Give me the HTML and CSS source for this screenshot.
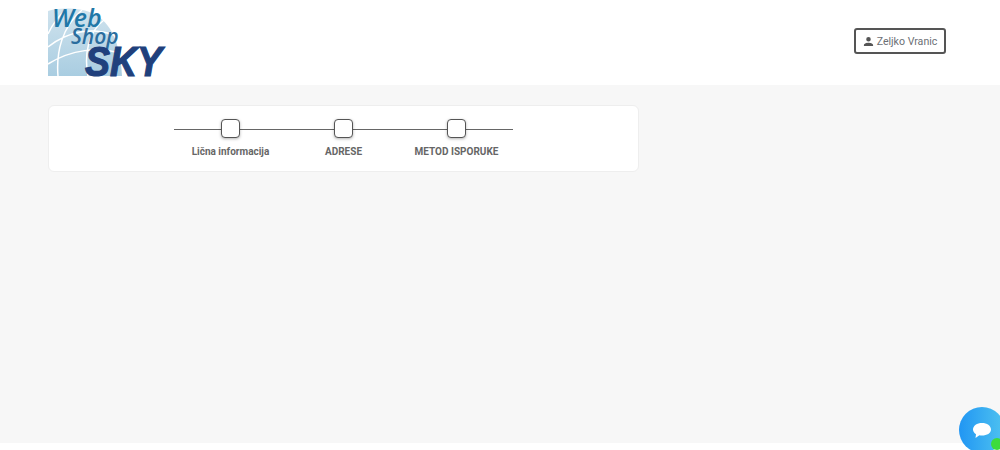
FILE: index.html
```html
<!DOCTYPE html>
<html lang="sr">
<head>
    <meta charset="UTF-8">
    <meta name="viewport" content="width=device-width, initial-scale=1.0">
    <title>Web Shop SKY</title>
    <link rel="stylesheet" href="styles.css">
</head>
<body>
    <header class="top-bar">
        <svg class="logo" width="120" height="70" viewBox="0 0 120 70">
            <defs>
                <linearGradient id="globeFill" x1="0" y1="0" x2="0" y2="1">
                    <stop offset="0" stop-color="#d0e3ee"/>
                    <stop offset="1" stop-color="#a9cde1"/>
                </linearGradient>
            </defs>
            <path d="M0 4 C14 0 34 1 46 7 C62 15 72 34 74 69 L0 69 Z" fill="url(#globeFill)"/>
            <path d="M0 27 C4 18 10 10 18 2 M10 69 C8 45 14 20 34 3 M40 69 C36 48 40 25 56 13 M0 40 C20 24 44 20 66 28 M0 57 C24 42 50 40 72 46" fill="none" stroke="#fff" stroke-width="1.5"/>
            <text class="logo-web" x="4" y="20">Web</text>
            <text class="logo-shop" x="23" y="37">Shop</text>
            <text class="logo-sky" x="37" y="69" textLength="77" lengthAdjust="spacingAndGlyphs">SKY</text>
        </svg>
        <button class="user-btn">
            <svg width="11" height="11" viewBox="0 0 24 24"><path d="M12 12a5 5 0 1 0 0-10 5 5 0 0 0 0 10zm0 2.500c-3.700 0-10 1.800-10 5.300V22h20v-2.200c0-3.500-6.300-5.300-10-5.300z" fill="#555"/></svg>
            Zeljko Vranic
        </button>
    </header>

    <main class="content">
        <div class="steps-card">
            <div class="stepper">
                <div class="step">
                    <div class="step-box"></div>
                    <div class="step-label">Lična informacija</div>
                </div>
                <div class="step">
                    <div class="step-box"></div>
                    <div class="step-label">ADRESE</div>
                </div>
                <div class="step">
                    <div class="step-box"></div>
                    <div class="step-label">METOD ISPORUKE</div>
                </div>
            </div>
        </div>
    </main>

    <footer class="bottom-bar"></footer>

    <div class="chat-bubble">
        <svg class="chat-icon" width="20" height="17" viewBox="0 0 20 17"><path d="M10 1c5 0 9 2.700 9 6.500s-4 6-9 6c-.9 0-1.800-.1-2.600-.3L3.500 16l.5-3.800C2.100 11 1 9.400 1 7.500 1 3.700 5 1 10 1z" fill="#fff"/></svg>
        <span class="chat-dot"></span>
    </div>
</body>
</html>
```

FILE: styles.css
```css
* {
    margin: 0;
    padding: 0;
    box-sizing: border-box;
}

html, body {
    height: 100%;
    overflow: hidden;
}

body {
    font-family: Roboto, "Liberation Sans", sans-serif;
    background: #fff;
    display: flex;
    flex-direction: column;
}

.top-bar {
    height: 85px;
    background: #fff;
    padding: 7px 54px 0 48px;
    display: flex;
    justify-content: space-between;
    align-items: flex-start;
}

.logo {
    display: block;
}

.logo-web {
    font: italic 600 25px "Open Sans", sans-serif;
    fill: #1f78a8;
}

.logo-shop {
    font: italic 600 21px "Open Sans", sans-serif;
    fill: #2a6d9e;
}

.logo-sky {
    font: italic 700 43px "Liberation Sans", sans-serif;
    fill: #20407c;
    stroke: #20407c;
    stroke-width: 1.2px;
}

.user-btn {
    margin-top: 21px;
    width: 92px;
    height: 26px;
    display: flex;
    align-items: center;
    justify-content: center;
    gap: 3px;
    border: 2px solid #555;
    border-radius: 3px;
    background: #fff;
    color: #6b6f75;
    font-family: Roboto, sans-serif;
    font-size: 10.6px;
}

.content {
    height: 358px;
    background: #f7f7f7;
    padding: 20px 48px 0;
}

.steps-card {
    width: 591px;
    height: 67px;
    background: #fff;
    border: 1px solid #eee;
    border-radius: 6px;
    padding-top: 13px;
    display: flex;
    justify-content: center;
}

.stepper {
    width: 339px;
    display: flex;
    background: linear-gradient(#666, #666) 0 10px / 100% 1px no-repeat;
}

.step {
    flex: 1;
    display: flex;
    flex-direction: column;
    align-items: center;
}

.step-box {
    width: 19px;
    height: 19px;
    background: #fff;
    border: 1px solid #555;
    border-radius: 4px;
    box-shadow: 0 1px 3px rgba(0,0,0,0.3);
}

.step-label {
    margin-top: 8px;
    font-size: 10px;
    font-weight: 700;
    color: #666;
    white-space: nowrap;
}

.bottom-bar {
    flex: 1;
    background: #fff;
}

.chat-bubble {
    position: fixed;
    left: 959px;
    top: 407px;
    width: 46px;
    height: 46px;
    border-radius: 50%;
    background: linear-gradient(90deg, #2196f3, #4fc3f0);
    display: flex;
    align-items: center;
    justify-content: center;
}

.chat-icon {
    margin-right: 1px;
}

.chat-dot {
    position: absolute;
    left: 32px;
    top: 31px;
    width: 12px;
    height: 12px;
    border-radius: 50%;
    background: #3ddc3d;
}
```
